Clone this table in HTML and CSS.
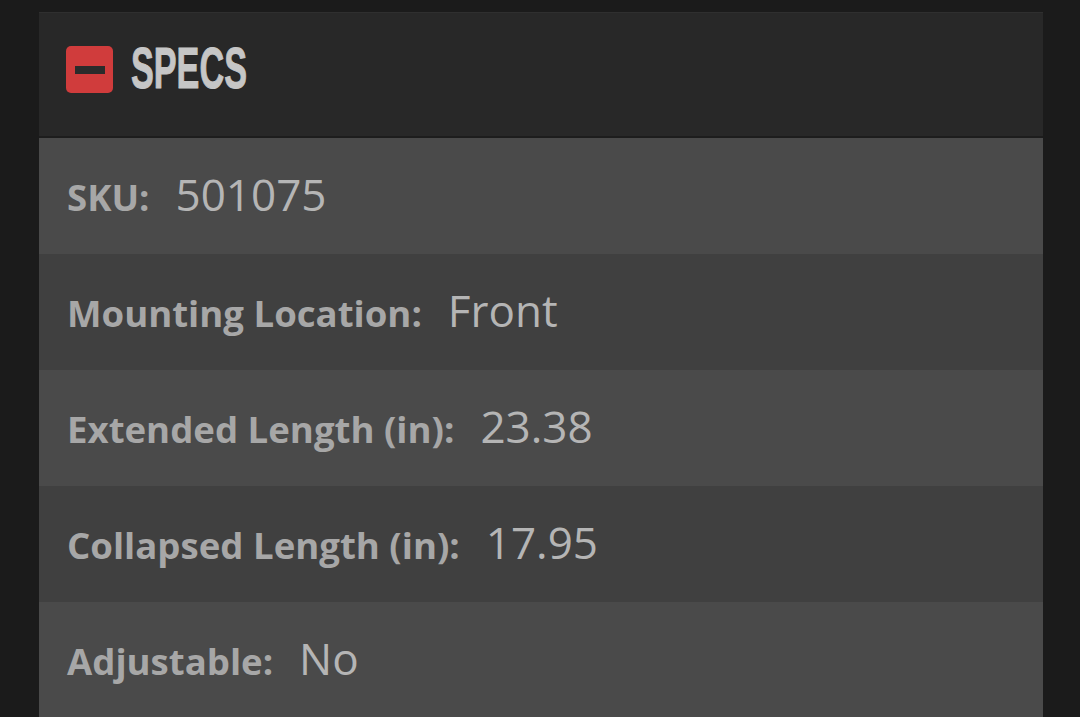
FILE: index.html
```html
<!DOCTYPE html>
<html>
<head>
<meta charset="utf-8">
<link rel="stylesheet" href="styles.css">
</head>
<body>
<section class="panel">
  <header class="panel-head">
    <span class="toggle" aria-hidden="true"><span class="bar"></span></span>
    <h2 class="title">SPECS</h2>
  </header>
  <div class="row"><div class="pair"><span class="label">SKU:</span><span class="value">501075</span></div></div>
  <div class="row alt"><div class="pair"><span class="label">Mounting Location:</span><span class="value">Front</span></div></div>
  <div class="row"><div class="pair"><span class="label">Extended Length (in):</span><span class="value">23.38</span></div></div>
  <div class="row alt"><div class="pair"><span class="label">Collapsed Length (in):</span><span class="value">17.95</span></div></div>
  <div class="row"><div class="pair"><span class="label">Adjustable:</span><span class="value">No</span></div></div>
</section>
</body>
</html>
```
FILE: styles.css
```css
html, body {
  margin: 0;
  padding: 0;
  background: #1b1b1b;
  height: 100%;
  overflow: hidden;
}
body {
  padding: 12px 0 0 39px;
  font-family: "Open Sans", "Noto Sans", sans-serif;
}
.panel {
  width: 1004px;
  background: #282828;
}
.panel-head {
  display: flex;
  align-items: center;
  padding-left: 27px;
  padding-bottom: 10px;
  border-top: 1px solid #2f2f2f;
  border-bottom: 2px solid #1d1d1d;
  box-sizing: border-box;
  height: 126px;
  gap: 18px;
}
.toggle {
  width: 47px;
  height: 47px;
  border-radius: 5px;
  background: #d03c3c;
  display: flex;
  align-items: center;
  justify-content: center;
}
.toggle .bar {
  width: 30px;
  height: 8px;
  background: #2b2b2b;
}
.title {
  margin: 0;
  font-family: "Liberation Sans", Arial, sans-serif;
  font-weight: bold;
  font-size: 57px;
  line-height: 1;
  color: #c6c6c6;
  transform: scaleX(0.6);
  transform-origin: left center;
  margin-top: -2px;
  -webkit-text-stroke: 1px #c6c6c6;
}
.row {
  height: 116px;
  background: #4a4a4a;
  display: flex;
  align-items: center;
  padding-left: 28px;
  padding-bottom: 4px;
  box-sizing: border-box;
}
.row.alt {
  background: #404040;
}
.pair {
  white-space: nowrap;
}
.label {
  font-weight: 700;
  font-size: 36.6px;
  color: #a7a7a7;
  margin-right: 26px;
}
.value {
  font-weight: 400;
  font-size: 44px;
  color: #b5b5b5;
}
```
